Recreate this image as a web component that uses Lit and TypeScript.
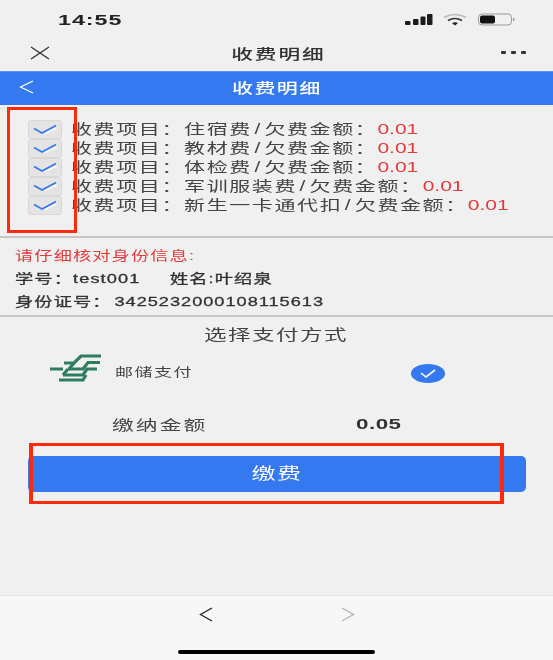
import { LitElement, html, css, svg } from "lit";
import { customElement } from "lit/decorators.js";

const items = ["住宿费", "教材费", "体检费", "军训服装费", "新生一卡通代扣"];

const tick = svg`<svg class="tick" viewBox="0 0 26 12" width="26" height="12"><path d="M13 10.5 L25 5" fill="none" stroke="#fafafa" stroke-width="1.8"/><path d="M2 5.5 L10 10 L24 2.5" fill="none" stroke="#3579f0" stroke-width="1.7"/></svg>`;

@customElement("app-root")
export class AppRoot extends LitElement {
  static styles = css`
    :host { display: block; width: 553px; height: 660px; position: relative; overflow: hidden; background: #f0f0f0; color: #3a3a3a; font-family: "Liberation Sans", "Noto Sans CJK SC", sans-serif; filter: blur(0.35px); }
    .wide { display: inline-block; white-space: nowrap; transform-origin: left center; transform: scaleX(1.5); }
    .center { transform-origin: center; }
    .status { height: 36px; display: flex; align-items: center; justify-content: space-between; padding: 4px 36px 0 58px; box-sizing: border-box; }
    .time { font-size: 14px; font-weight: 700; color: #222; letter-spacing: 0.6px; transform: scaleX(1.66); }
    .nav { height: 35px; display: grid; grid-template-columns: 1fr auto 1fr; align-items: center; padding: 0 27px 2px 30px; box-sizing: border-box; }
    .navtitle { font-size: 14px; font-weight: 500; letter-spacing: 1.2px; color: #333; transform: scaleX(1.55); }
    .dots { display: flex; gap: 5px; justify-self: end; }
    .dots i { width: 5px; height: 3px; border-radius: 1px; background: #333; }
    .head { height: 34px; background: #3579f0; display: grid; grid-template-columns: 1fr auto 1fr; align-items: center; color: #fff; padding-bottom: 3px; box-sizing: border-box; border-top: 1px solid #5b93f3; }
    .back { margin-left: 19px; }
    .headtitle { font-size: 14px; font-weight: 500; letter-spacing: 0.9px; transform: scaleX(1.5); }
    .items { height: 133px; box-sizing: border-box; padding-top: 15px; border-bottom: 2px solid #c6c6c6; }
    .row { height: 18.9px; display: flex; align-items: center; padding-left: 28px; }
    .box { width: 34px; height: 19px; box-sizing: border-box; background: #e4e4e4; border: 1px solid #d8d8d8; border-radius: 3px; display: flex; align-items: center; justify-content: center; flex: none; }
    .rowtext { margin-left: 8.5px; font-size: 14px; letter-spacing: 1.07px; color: #444; line-height: 1; }
    .slash { padding: 0 1.7px; }
    .red { color: #e23b3b; letter-spacing: 0; }
    .info { height: 79px; box-sizing: border-box; padding: 8px 0 0 15px; border-bottom: 2px solid #c6c6c6; display: flex; flex-direction: column; gap: 9px; }
    .info .wide { font-size: 13px; line-height: 14px; letter-spacing: 0.8px; transform: scaleX(1.4); }
    .inforow { height: 14px; }
    .warn { color: #e23b3b; }
    .strong { color: #333; -webkit-text-stroke: 0.3px #333; }
    .gap { display: inline-block; width: 21px; }
    .idnum { letter-spacing: 0.7px; margin-left: 2px; }
    .paytitle { text-align: center; padding-top: 9px; height: 27px; }
    .paytitle .wide { font-size: 15px; line-height: 18px; letter-spacing: 1px; color: #444; }
    .method { height: 36px; display: flex; align-items: center; padding-left: 50px; }
    .logo { margin-bottom: 6px; flex: none; }
    .mname { font-size: 12px; letter-spacing: 1px; margin-left: 13px; color: #444; }
    .radio { margin: 4px 108px 0 auto; width: 34px; height: 19px; border-radius: 50%; background: #3579f0; display: flex; align-items: center; justify-content: center; }
    .amount { display: flex; height: 20px; align-items: center; margin-top: 25px; padding-left: 112px; }
    .amount .label { font-size: 14px; letter-spacing: 1.4px; color: #444; transform: scaleX(1.55); width: 244px; }
    .amount .num { font-size: 14px; font-weight: 700; letter-spacing: 0.3px; color: #333; transform: scaleX(1.6); }
    .btn { margin: 22px 27px 0 28px; height: 36px; padding-bottom: 4px; box-sizing: border-box; background: #3579f0; color: #fff; border-radius: 5px; display: flex; align-items: center; justify-content: center; font-size: 16px; }
    .btn span { letter-spacing: 1px; }
    .toolbar { position: absolute; left: 0; right: 0; bottom: 0; height: 65px; background: #f7f7f7; border-top: 1px solid #e8e8e8; box-sizing: border-box; }
    .tools { display: flex; justify-content: center; gap: 128px; padding-top: 11px; }
    .homebar { position: absolute; left: 178px; bottom: 6px; width: 197px; height: 4px; border-radius: 2px; background: #000; }
    .mark { position: absolute; border: 3px solid #ff2a0a; box-sizing: border-box; }
    .m1 { left: 7px; top: 107px; width: 70px; height: 126px; }
    .m2 { left: 29px; top: 443px; width: 475px; height: 61px; border-width: 3px 4px; }
  `;

  render() {
    return html`
      <div class="status">
        <span class="time wide">14:55</span>
        <svg width="112" height="14" viewBox="0 0 112 14">
          <rect x="0" y="8" width="5.5" height="4" rx="1" fill="#1c1c1c"/><rect x="8" y="6" width="5.5" height="6" rx="1" fill="#1c1c1c"/><rect x="15.5" y="3.5" width="5" height="8.5" rx="1" fill="#1c1c1c"/><rect x="22" y="1" width="5.5" height="11" rx="1" fill="#1c1c1c"/>
          <path d="M39 4.5 Q50 -1.5 61 4.5" fill="none" stroke="#bbb" stroke-width="1.6"/><path d="M43 7.5 Q50 3.5 57 7.5" fill="none" stroke="#333" stroke-width="1.6"/><path d="M47 10 L50 12.5 L53 10 Q50 8.5 47 10Z" fill="#222"/>
          <rect x="73.5" y="1" width="33" height="11" rx="3.5" fill="none" stroke="#999"/><rect x="75" y="2.5" width="15" height="8" rx="2" fill="#111"/><rect x="108" y="5" width="1.4" height="3" fill="#999"/>
        </svg>
      </div>
      <div class="nav">
        <svg width="20" height="14" viewBox="0 0 20 14"><path d="M1 1 L19 13 M19 1 L1 13" stroke="#333" stroke-width="1.4"/></svg>
        <span class="navtitle wide center">收费明细</span>
        <span class="dots"><i></i><i></i><i></i></span>
      </div>
      <div class="head">
        <svg class="back" width="15" height="14" viewBox="0 0 15 14"><path d="M14 1 L1.5 7 L14 13" fill="none" stroke="#fff" stroke-width="1.3"/></svg>
        <span class="headtitle wide center">收费明细</span>
      </div>
      <div class="items">
        ${items.map((n) => html`<div class="row"><span class="box">${tick}</span><span class="rowtext wide">收费项目：${n}<span class="slash">/</span>欠费金额：<span class="red">0.01</span></span></div>`)}
      </div>
      <div class="info">
        <div class="inforow"><span class="wide warn">请仔细核对身份信息:</span></div>
        <div class="inforow"><span class="wide strong">学号：test001<span class="gap"></span>姓名:叶绍泉</span></div>
        <div class="inforow"><span class="wide strong">身份证号：<span class="idnum">3425232000108115613</span></span></div>
      </div>
      <div class="paytitle"><span class="wide center">选择支付方式</span></div>
      <div class="method">
        <svg class="logo" width="52" height="28" viewBox="0 0 52 28">
          <g fill="none" stroke="#2e7d60" stroke-width="3.2">
            <path d="M14 9 L24 9 L31 2 L51 2"/>
            <path d="M0 15 L13 15 M18 15 L33 15 L38 8.5 L50 8.5"/>
            <path d="M13 21 L33 21 L37 15 L47 15"/>
            <path d="M9 26 L33 26 L36 21"/>
            <path d="M24 9 L19 15 M18 15 L13 21"/>
          </g>
        </svg>
        <span class="mname wide">邮储支付</span>
        <span class="radio"><svg width="18" height="11" viewBox="0 0 18 11"><path d="M2 5 L7 9 L16 2" fill="none" stroke="#fff" stroke-width="1.6"/></svg></span>
      </div>
      <div class="amount"><span class="label wide">缴纳金额</span><span class="num wide">0.05</span></div>
      <div class="btn"><span class="wide center">缴费</span></div>
      <div class="toolbar">
        <div class="tools">
          <svg width="14" height="15" viewBox="0 0 14 15"><path d="M13 1 L1.5 7.5 L13 14" fill="none" stroke="#222" stroke-width="1.3"/></svg>
          <svg width="14" height="15" viewBox="0 0 14 15"><path d="M1 1 L12.5 7.5 L1 14" fill="none" stroke="#b4b4b4" stroke-width="1.3"/></svg>
        </div>
        <div class="homebar"></div>
      </div>
      <div class="mark m1"></div>
      <div class="mark m2"></div>
    `;
  }
}
